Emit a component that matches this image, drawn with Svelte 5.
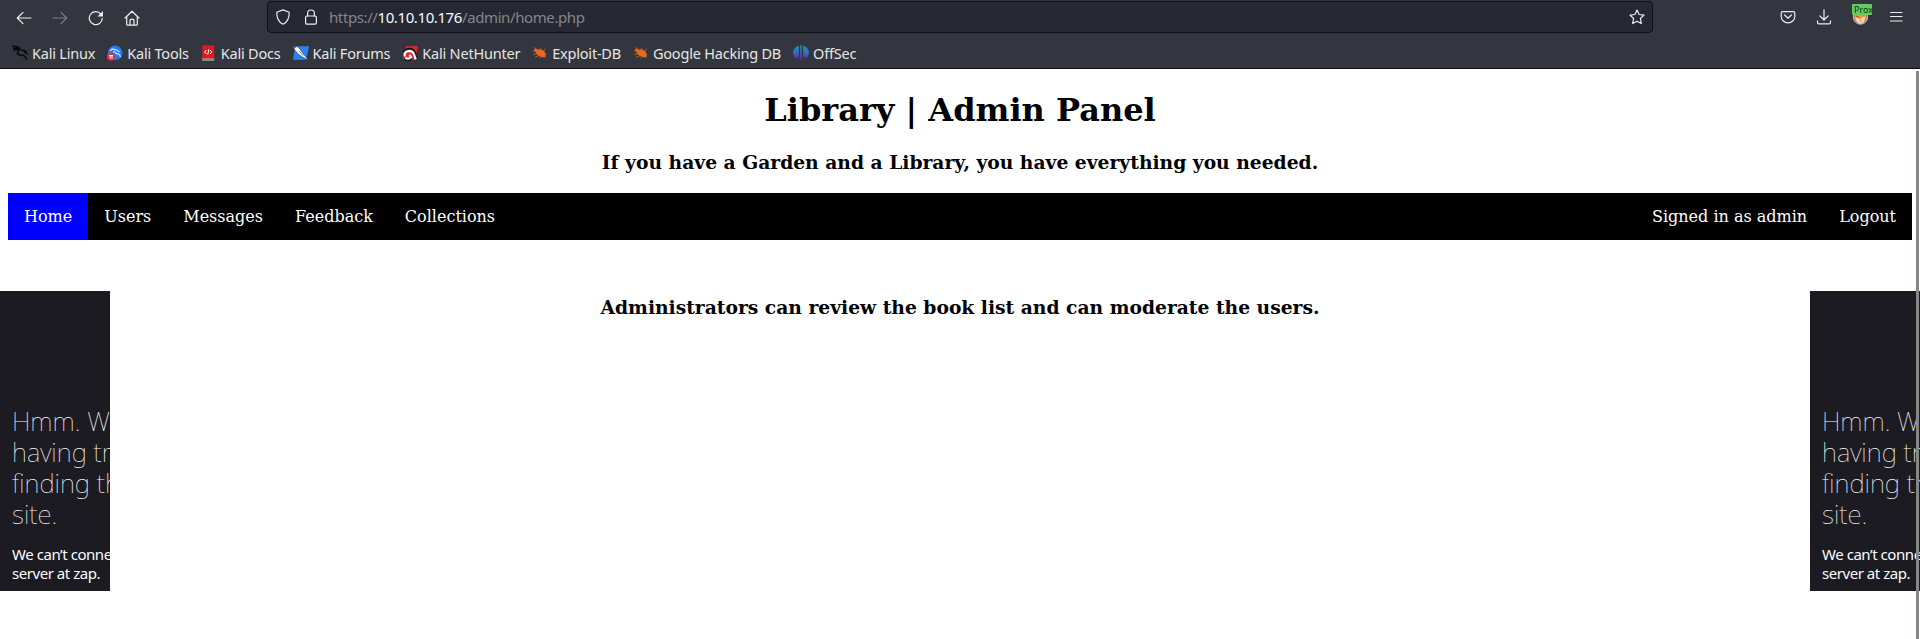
<script>
  const bookmarks = [
    { name: 'Kali Linux', icon: 'dragon' },
    { name: 'Kali Tools', icon: 'tools' },
    { name: 'Kali Docs', icon: 'docs' },
    { name: 'Kali Forums', icon: 'forums' },
    { name: 'Kali NetHunter', icon: 'hunter' },
    { name: 'Exploit-DB', icon: 'bug' },
    { name: 'Google Hacking DB', icon: 'bug' },
    { name: 'OffSec', icon: 'offsec' }
  ];
  const links = ['Home', 'Users', 'Messages', 'Feedback', 'Collections'];
</script>

{#snippet frame()}
  <div class="frame">
    <h2>Hmm. We’re<br />having trouble<br />finding that<br />site.</h2>
    <p>We can’t connect to the<br />server at zap.</p>
  </div>
{/snippet}

<div class="window">
  <header class="chrome">
    <div class="toolbar">
      <div class="navbtns">
        <svg class="i" viewBox="0 0 16 16"><path d="M15 8H1.5M7 2.3L1.3 8L7 13.7" /></svg>
        <svg class="i dim" viewBox="0 0 16 16"><path d="M1 8h13.5M9 2.3L14.7 8L9 13.7" /></svg>
        <svg class="i" viewBox="0 0 16 16"><path d="M14.3 8.3A6.5 6.5 0 1 1 12.8 4" /><path class="fill" d="M15 1v5.5H9.5z" /></svg>
        <svg class="i" viewBox="0 0 16 16"><path d="M1 8L8 1.2L15 8M2.7 6.8v7.4q0 1 1 1h8.6q1 0 1-1V6.8M6 15v-4q0-1.8 2-1.8t2 1.8v4" /></svg>
      </div>
      <div class="url">
        <svg class="i" viewBox="0 0 16 16"><path d="M8 .9L14.2 3.2C14.4 8.5 12.5 13 8 15.2C3.5 13 1.6 8.5 1.8 3.2Z" /></svg>
        <svg class="i lock" viewBox="0 0 16 16"><path d="M4.6 7V4.4a3.4 3.4 0 0 1 6.8 0V7" /><rect x="2.6" y="7" width="10.8" height="8.1" rx="1.3" /></svg>
        <span class="address">https://<b>10.10.10.176</b>/admin/home.php</span>
        <svg class="i star" viewBox="0 0 16 16"><path d="M8 1L10.1 5.5L15 6.1L11.4 9.5L12.3 14.6L8 12.2L3.7 14.6L4.6 9.5L1 6.1L5.9 5.5Z" /></svg>
      </div>
      <div class="actions">
        <svg class="i" viewBox="0 0 16 16"><path d="M2.6 2.6h10.8q1.4 0 1.4 1.4v3.6a6.8 6.3 0 0 1-13.6 0V4q0-1.4 1.4-1.4zM4.6 6L8 9.2L11.4 6" /></svg>
        <svg class="i" viewBox="0 0 16 16"><path d="M8 .8v10M3.8 6.8L8 11L12.2 6.8M1.5 11.8v1.6q0 1.4 1.4 1.4h10.2q1.4 0 1.4-1.4v-1.6" /></svg>
        <div class="proxy">
          <svg viewBox="0 0 16 16" width="16" height="16"><circle cx="8.5" cy="8" r="7.2" fill="#a9846a" stroke="#c9bcb1" /><path d="M3 5h11v4l-5.5 5L3 9z" fill="#f5912d" /><path d="M2.8 8l4 1.2 1.2 2.3 1.7-3 4-1L12 13l-3.5 2-3.5-2z" fill="#fad9b4" /><path d="M4.5 7.2l2.2.8M8.5 12.7l1-1" stroke="#704126" /></svg>
          <span>Prox</span>
        </div>
        <svg class="i" viewBox="0 0 16 16"><path d="M2.5 3.5h11.5M2.5 7.5h11.5M2.5 12h11.5" /></svg>
      </div>
    </div>
    <div class="bookmarks">
      {#each bookmarks as b}
        <div class="bookmark">
          <svg viewBox="0 0 16 16" width="16" height="16">
            {#if b.icon === 'dragon'}
              <path d="M0 1L5.5 1.8L8 3.5M1 3.2L5 3.1L8 4M1.5 5.4L4 4.3L7.2 4.8Q12.5 4.5 14.8 8.4L12.2 7.1M7.2 4.8Q4.1 8.4 6.4 9.6L11.3 10.4Q14 11.5 14.5 15M12.3 5.8L14 6" fill="none" stroke="#08090b" stroke-width="1.5" />
            {:else if b.icon === 'tools'}
              <circle cx="8.2" cy="7.8" r="7.3" fill="#2878f0" />
              <path d="M3 5.5Q8 2.4 12.5 7M6 7.2Q8 6 9.2 8.6Q12.5 8.3 13.5 12M4.5 3.8L8 4.6" stroke="#d5e6ff" stroke-width="1.2" fill="none" />
              <circle cx="3.8" cy="11.7" r="4" fill="#e5303a" /><path d="M2 10.5h3.8M3.2 10.5v3.2M5 10.5v3.2" stroke="#fff" />
            {:else if b.icon === 'docs'}
              <path d="M1.3.5h11.9v12.8H1.3z" fill="#d91c21" /><path d="M1.3 13.2h11.9v2.3H1.3z" fill="#e8d5d2" /><path d="M1.3 14h11.9" stroke="#b51218" />
              <path d="M5.5 5L3.6 7L5.5 9M9 5L10.9 7L9 9M7.8 4.3L6.7 9.7" stroke="#fff" fill="none" />
            {:else if b.icon === 'forums'}
              <path d="M2.2 1.2H16L13.3 14.7H0z" fill="#2a83f4" /><path d="M0 .5L2.2 2.8L4 1.3L7 4L10 8.5L15.5 15L9.2 12L5.4 9.3L1.5 4.7z" fill="#f7fafc" stroke="#121827" stroke-width=".5" /><path d="M6.3 6.2l3.8 4.5" stroke="#737d87" />
            {:else if b.icon === 'hunter'}
              <path d="M4 1.2H16L12.9 14.7H1z" fill="#e7222e" /><path d="M1.3 7.5Q9 1.2 12.5 8L14.2 14.5M2.5 13.2Q6.3 16 9.2 12.6" fill="none" stroke="#17171b" stroke-width="3.4" /><path d="M2.8 11.5Q1.5 6.3 7.2 5.8Q10.8 5.9 11.8 9L13.8 14.5M3.2 12.8Q6.5 14.5 9 12.2L7.5 9.8" fill="none" stroke="#fff" stroke-width="2.2" />
            {:else if b.icon === 'bug'}
              <path d="M1.5 5.3L4 3.3L5.4 4.5L8.4 4.2L12.5 6.5L14 9.8L13.2 12.5L9.5 12L5 9.7L3.5 6.5z" fill="#e9681d" /><path d="M4 6L1 5.8M5 8.5L1.4 9.4M7 10.5L3 12.5M9 11.5L7 13.4M8 5L9.5 2.8M11 6L13.7 3.8M4 3.8L2.2 2.5" fill="none" stroke="#e9681d" stroke-width=".8" />
            {:else}
              <defs><linearGradient id="offsec" x1="0" y1="0" x2="0" y2="1"><stop stop-color="#159fc0" /><stop offset="1" stop-color="#632bc1" /></linearGradient></defs>
              <path d="M5.8 .8V15L4.7 10.5L3.4 13.4Q-3 8 2.6 2.3zM10.2 .8V15L11.3 10.5L12.6 13.4Q19 8 13.4 2.3zM7.3.3h1.4v15H7.3z" fill="url(#offsec)" />
            {/if}
          </svg>
          <span>{b.name}</span>
        </div>
      {/each}
    </div>
  </header>
  <main>
    <h1>Library | Admin Panel</h1>
    <h3>If you have a Garden and a Library, you have everything you needed.</h3>
    <nav>
      {#each links as link, i}<span class="link" class:active={i === 0}>{link}</span>{/each}
      <span class="link session">Signed in as admin</span>
      <span class="link">Logout</span>
    </nav>
    <section>
      {@render frame()}
      <h3>Administrators can review the book list and can moderate the users.</h3>
      {@render frame()}
    </section>
    <div class="scrollbar"></div>
  </main>
</div>

<style>
  :global(body) { margin: 0; background: #fff; overflow: hidden; }
  .window { width: 1920px; height: 639px; overflow: hidden; display: flex; flex-direction: column; }
  .chrome { height: 68px; box-sizing: content-box; border-bottom: 1px solid #0c0c0e; background: #33363e; font-family: 'Noto Sans', sans-serif; color: #e6e6e4; flex: none; }
  .toolbar { height: 34px; display: flex; align-items: flex-start; }
  .navbtns { display: flex; gap: 20px; padding: 10px 0 0 16px; width: 251px; box-sizing: border-box; }
  .i { width: 16px; height: 16px; flex: none; fill: none; stroke: #eeeef0; stroke-width: 1.2; stroke-linecap: round; stroke-linejoin: round; }
  .i .fill { fill: #eeeef0; stroke: none; }
  .dim { opacity: .4; }
  .url { margin: 1px 0 0 16px; width: 1386px; height: 32px; box-sizing: border-box; border: 1px solid #101116; border-radius: 4px; background: #262833; display: flex; align-items: center; padding: 0 7px; }
  .lock { margin-left: 12px; }
  .address { margin-left: 10px; font-size: 15px; letter-spacing: -.4px; line-height: 20px; color: #85868b; }
  .address b { font-weight: 400; color: #fbfbfe; }
  .star { margin-left: auto; }
  .actions { display: flex; gap: 20px; padding: 9px 0 0 127px; }
  .proxy { width: 16px; height: 16px; position: relative; }
  .proxy svg { display: block; }
  .proxy span { position: absolute; left: 0; top: -5px; width: 18px; height: 11px; padding-left: 2px; overflow: hidden; border-radius: 1px; background: #62cc63; color: #123515; font-size: 9px; line-height: 11px; }
  .bookmarks { height: 34px; display: flex; gap: 12px; padding-left: 12px; }
  .bookmark { display: flex; gap: 4px; height: 38px; align-items: center; font-size: 14.5px; letter-spacing: -.21px; line-height: 20px; white-space: nowrap; }
  main { flex: 1; position: relative; font-family: 'DejaVu Serif', serif; color: #000; display: flex; flex-direction: column; }
  h1 { margin: 22px 0 0; font-size: 32px; line-height: 38px; text-align: center; }
  h3 { margin: 22px 0 0; font-size: 18.72px; line-height: 22px; text-align: center; }
  nav { margin: 20px 8px 0; height: 47px; background: #000; display: flex; flex: none; }
  .link { padding: 14px 16px; line-height: 19px; font-size: 16px; color: #fff; }
  .active { background: #00f; }
  .session { margin-left: auto; }
  section { margin-top: 51px; display: flex; justify-content: space-between; }
  section h3 { margin-top: 5px; }
  .frame { width: 110px; height: 300px; box-sizing: border-box; padding: 115px 0 0 12px; overflow: hidden; background: #1c1b22; color: #fbfbfe; font-family: 'Noto Sans', sans-serif; white-space: nowrap; }
  h2 { margin: 0; font-size: 26px; font-weight: 100; line-height: 31px; }
  p { margin: 15px 0 0; font-size: 15px; letter-spacing: -.45px; line-height: 19px; }
  .scrollbar { position: absolute; right: 1px; top: 2px; width: 3px; bottom: 0; background: #858787; }
</style>
